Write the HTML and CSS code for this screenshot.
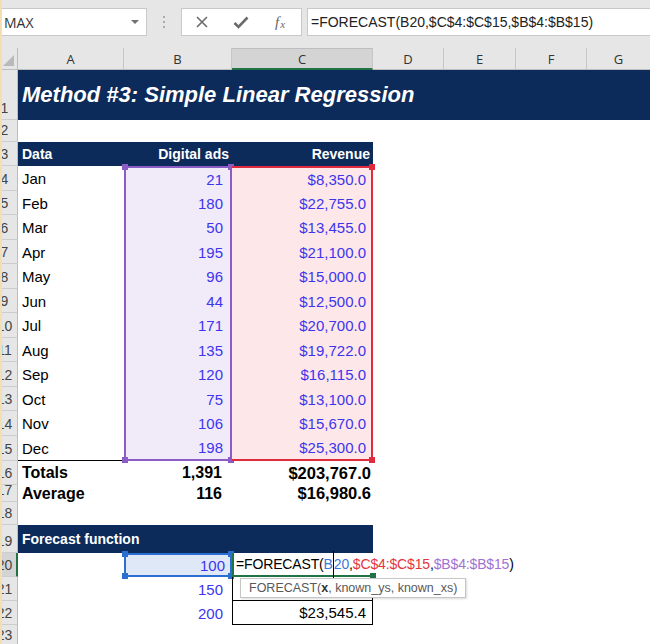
FILE: index.html
```html
<!DOCTYPE html>
<html>
<head>
<meta charset="utf-8">
<link rel="stylesheet" href="styles.css">
</head>
<body>
<div class="app">
  <div class="toolbar">
    <div class="namebox"><span>MAX</span><span class="drop"></span></div>
    <div class="grip"><i></i><i></i><i></i></div>
    <div class="fxbox">
      <svg width="12" height="12" viewBox="0 0 12 12"><path d="M1 1 L11 11 M11 1 L1 11" stroke="#6b6b6b" stroke-width="1.6" fill="none"/></svg>
      <svg width="16" height="13" viewBox="0 0 16 13"><path d="M1.5 7 L5.5 11 L14.5 1.5" stroke="#6b6b6b" stroke-width="2.6" fill="none"/></svg>
      <span class="fx"><i>f</i><sub>x</sub></span>
    </div>
    <div class="formula">=FORECAST(B20,$C$4:$C$15,$B$4:$B$15)</div>
  </div>

  <div class="sheet">
    <div class="corner"></div>
    <div class="ch">A</div><div class="ch">B</div><div class="ch csel">C</div><div class="ch">D</div><div class="ch">E</div><div class="ch">F</div><div class="ch last">G</div>

    <div class="rh"><span>1</span></div><div class="title">Method #3: Simple Linear Regression</div>
    <div class="rh"><span>2</span></div>
    <div class="rh"><span>3</span></div><div class="c hd">Data</div><div class="c hd n hb">Digital ads</div><div class="c hd n hc">Revenue</div>

    <div class="rh"><span>4</span></div><div class="c">Jan</div><div class="c n rb first"><b class="h p tl"></b><b class="h p tr"></b>21</div><div class="c n rc first"><b class="h r tr"></b>$8,350.0</div>
    <div class="rh"><span>5</span></div><div class="c">Feb</div><div class="c n rb">180</div><div class="c n rc">$22,755.0</div>
    <div class="rh"><span>6</span></div><div class="c">Mar</div><div class="c n rb">50</div><div class="c n rc">$13,455.0</div>
    <div class="rh"><span>7</span></div><div class="c">Apr</div><div class="c n rb">195</div><div class="c n rc">$21,100.0</div>
    <div class="rh"><span>8</span></div><div class="c">May</div><div class="c n rb">96</div><div class="c n rc">$15,000.0</div>
    <div class="rh"><span>9</span></div><div class="c">Jun</div><div class="c n rb">44</div><div class="c n rc">$12,500.0</div>
    <div class="rh"><span>10</span></div><div class="c">Jul</div><div class="c n rb">171</div><div class="c n rc">$20,700.0</div>
    <div class="rh"><span>11</span></div><div class="c">Aug</div><div class="c n rb">135</div><div class="c n rc">$19,722.0</div>
    <div class="rh"><span>12</span></div><div class="c">Sep</div><div class="c n rb">120</div><div class="c n rc">$16,115.0</div>
    <div class="rh"><span>13</span></div><div class="c">Oct</div><div class="c n rb">75</div><div class="c n rc">$13,100.0</div>
    <div class="rh"><span>14</span></div><div class="c">Nov</div><div class="c n rb">106</div><div class="c n rc">$15,670.0</div>
    <div class="rh"><span>15</span></div><div class="c under">Dec</div><div class="c n rb lastr"><b class="h p bl"></b><b class="h p br"></b>198</div><div class="c n rc lastr"><b class="h r br"></b>$25,300.0</div>

    <div class="rh"><span>16</span></div><div class="c tot">Totals</div><div class="c n tot tb">1,391</div><div class="c n tot tc">$203,767.0</div>
    <div class="rh"><span>17</span></div><div class="c tot">Average</div><div class="c n tot tb">116</div><div class="c n tot tc">$16,980.6</div>
    <div class="rh"><span>18</span></div>
    <div class="rh"><span>19</span></div><div class="c hd fc">Forecast function</div>

    <div class="rh rsel"><span>20</span></div><div class="c"></div><div class="c n bsel"><b class="h bl2 tl"></b><b class="h bl2 tr"></b><b class="h bl2 bl"></b><b class="h bl2 br"></b>100</div><div class="c edit">=FORECAST(<span class="f1">B<span class="caret"></span>20</span>,<span class="f2">$C$4:$C$15</span>,<span class="f3">$B$4:$B$15</span>)<b class="gh"></b></div>
    <div class="rh"><span>21</span></div><div class="c"></div><div class="c n blue pb">150</div><div class="c n bx"><div class="tip">FORECAST(<b>x</b>, known_ys, known_xs)</div></div>
    <div class="rh"><span>22</span></div><div class="c"></div><div class="c n blue pb">200</div><div class="c n bx v22">$23,545.4</div>
    <div class="rh"><span>23</span></div>
  </div>
</div>
</body>
</html>
```

FILE: styles.css
```css
* { box-sizing: border-box; }
body { margin: 0; background: #fff; font-family: "Liberation Sans", Arial, sans-serif; overflow: hidden; }
.app { position: relative; width: 650px; height: 644px; overflow: hidden; }
.app::before { content: ""; position: absolute; left: 0; top: 0; bottom: 0; width: 2px; background: #f3dfb3; z-index: 20; }

.toolbar { height: 48px; background: #e6e6e6; display: flex; align-items: flex-start; padding-top: 8px; }
.namebox { width: 147px; height: 28px; background: #fff; border: 1px solid #c9c9c9; display: flex; align-items: center; justify-content: space-between; padding: 0 7px 0 3px; font: 14px "Open Sans", sans-serif; color: #333; }
.drop { width: 0; height: 0; border-left: 4px solid transparent; border-right: 4px solid transparent; border-top: 4px solid #707070; }
.grip { width: 34px; height: 28px; display: flex; flex-direction: column; align-items: center; justify-content: center; gap: 3px; }
.grip i { display: block; width: 2px; height: 2px; background: #ababab; }
.fxbox { width: 121px; height: 28px; background: #fff; border: 1px solid #c9c9c9; display: grid; grid-template-columns: 40px 38px 40px; align-items: center; justify-items: center; margin-right: 5px; }
.fx { font-family: "Liberation Serif", serif; font-style: italic; color: #666; font-size: 15px; line-height: 1; }
.fx i { font-style: italic; }
.fx sub { font-size: 11px; vertical-align: -1px; margin-left: 1px; }
.formula { flex: 1; height: 28px; background: #fff; border: 1px solid #c9c9c9; border-right: 0; padding-left: 3px; display: flex; align-items: center; font-size: 14px; color: #222; white-space: nowrap; }

.sheet { display: grid; grid-template-columns: 18px 106px 108px 141px 71px 72px 71px 63px;
  grid-template-rows: 22px 50px 22px 24px 25px 24px 25px 24px 25px 24px 25px 24px 25px 24px 25px 25px 24px 17px 23px 28px 24px 24px 24px; }

.corner { grid-column: 1; background: #e6e6e6; border-right: 1px solid #bdbdbd; border-bottom: 1px solid #bdbdbd; position: relative; }
.corner::after { content: ""; position: absolute; right: 3px; bottom: 3px; width: 11px; height: 11px; background: #b9b9b9; clip-path: polygon(100% 0, 100% 100%, 0 100%); }
.ch { background: #e6e6e6; border-right: 1px solid #c6c6c6; border-bottom: 1px solid #bdbdbd; display: flex; align-items: center; justify-content: center; font: 13px "Open Sans", sans-serif; color: #333; }
.ch.last { border-right: 0; }
.ch.csel { background: #d4d4d4; border-bottom: 2px solid #217346; border-top: 1px solid #bdbdbd; }

.rh { grid-column: 1; background: #e6e6e6; border-right: 1px solid #bdbdbd; border-bottom: 1px solid #cdcdcd; overflow: hidden; display: flex; align-items: flex-end; padding-bottom: 1px; font-size: 14px; color: #444; }
.rh span { flex: none; width: 26px; margin-left: -8.5px; text-align: center; line-height: 20px; }
.rh.rsel { background: #d4d4d4; border-right: 2px solid #217346; }

.title { grid-column: 2 / -1; background: #0c2b5b; color: #fff; font-weight: bold; font-style: italic; font-size: 22px; display: flex; align-items: center; padding-left: 4px; white-space: nowrap; }

.c { display: flex; align-items: center; padding: 0 4px; font-size: 15px; white-space: nowrap; color: #000; position: relative; }
.n { justify-content: flex-end; }
.hd { background: #0c2b5b; color: #fff; font-weight: bold; font-size: 14px; }
.hb, .hc { padding-right: 3px; }
.fc { grid-column: 2 / 5; }

.rb { background: #f0eaf9; border-left: 2px solid #8b5cc6; border-right: 2px solid #8b5cc6; padding-right: 7px; color: #3d35ee; }
.rb.first { border-top: 2px solid #8b5cc6; }
.rb.lastr { border-bottom: 2px solid #8b5cc6; }
.rc { background: #fde7e8; border-right: 2px solid #e02a3d; padding-right: 5px; color: #3d35ee; }
.rc.first { border-top: 2px solid #e02a3d; }
.rc.lastr { border-bottom: 2px solid #e02a3d; }
.under { border-bottom: 1px solid #000; }

.h { position: absolute; width: 6px; height: 6px; display: block; }
.h.p { background: #8b5cc6; }
.h.r { background: #e02a3d; }
.h.bl2 { background: #2b6ed2; }
.h.tl { left: -4px; top: -4px; }
.h.tr { right: -4px; top: -4px; }
.h.bl { left: -4px; bottom: -4px; }
.h.br { right: -4px; bottom: -4px; }

.tot { font-weight: bold; font-size: 16px; }
.tb { padding-right: 10px; }
.tc { padding-right: 2px; font-size: 16.5px; }

.blue { color: #3d35ee; }
.bsel { background: #dfe8f7; border: 2px solid #2b6ed2; padding-right: 5px; color: #3d35ee; }
.pb { padding-right: 9px; }

.edit { border-left: 2px solid #217346; border-bottom: 2px solid #217346; padding-left: 2px; font-size: 14px; letter-spacing: -0.15px; overflow: visible; z-index: 2; }
.f1 { color: #3c78d8; }
.f2 { color: #e5343f; }
.f3 { color: #a272d2; }
.caret { display: inline-block; width: 1px; height: 28px; background: #000; vertical-align: middle; margin: -10px 0; }
.gh { position: absolute; right: -3px; bottom: -4px; width: 6px; height: 6px; background: #217346; display: block; }

.bx { border-left: 1px solid #000; border-right: 1px solid #000; border-bottom: 1px solid #000; }
.v22 { padding-right: 6px; }
.tip { position: absolute; left: 7px; top: 1px; height: 20px; padding: 0 8px; border: 1px solid #c6c6c6; background: #fff; box-shadow: 1px 1px 2px rgba(0,0,0,0.15); font-size: 12.5px; color: #595959; display: flex; align-items: center; white-space: nowrap; z-index: 5; }
.tip b { color: #333; }
```
